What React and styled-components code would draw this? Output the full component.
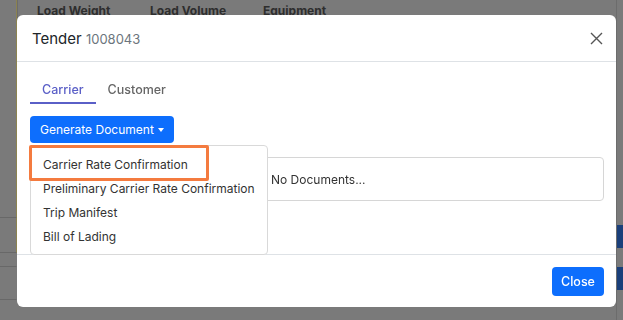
import React, { useState } from 'react'
import styled, { createGlobalStyle } from 'styled-components'

const GlobalStyle = createGlobalStyle`
	html, body {
		margin: 0;
		padding: 0;
		width: 623px;
		height: 320px;
		overflow: hidden;
		background: #7a7a7a;
		font-family: Inter, "Noto Sans", "Liberation Sans", sans-serif;
	}
`

const menuItems = [
	'Carrier Rate Confirmation',
	'Preliminary Carrier Rate Confirmation',
	'Trip Manifest',
	'Bill of Lading'
]

function CloseIcon() {
	return (
		<svg width="13" height="13" viewBox="0 0 13 13">
			<path d="M1 1 L12 12 M12 1 L1 12" stroke="#555" strokeWidth="1.4" fill="none" />
		</svg>
	)
}

function App() {
	const [tab, setTab] = useState('carrier')

	return (
		<>
			<GlobalStyle />
			<Page>
				<LeftStrip>
					<StripCell height={218} />
					<StripCell height={35} />
					<StripCell height={14} plain />
					<StripCell height={33} plain />
				</LeftStrip>
				<Main>
					<HeaderRow>
						<HeadCell>Load Weight</HeadCell>
						<HeadCell>Load Volume</HeadCell>
						<HeadCell>Equipment</HeadCell>
					</HeaderRow>
				</Main>
				<RightStrip>
					<BlueChip top={225} />
					<BlueChip top={267} />
				</RightStrip>
			</Page>

			<Modal>
				<ModalHeader>
					<Title>
						Tender <TitleId>1008043</TitleId>
					</Title>
					<CloseButton aria-label="close">
						<CloseIcon />
					</CloseButton>
				</ModalHeader>

				<ModalBody>
					<Tabs>
						<Tab active={tab === 'carrier'} onClick={() => setTab('carrier')}>
							Carrier
						</Tab>
						<Tab active={tab === 'customer'} onClick={() => setTab('customer')}>
							Customer
						</Tab>
					</Tabs>

					<Dropdown>
						<PrimaryButton>
							Generate Document<Caret />
						</PrimaryButton>
						<Menu>
							{menuItems.map((item, i) => (
								<MenuItem key={item}>
									{item}
									{i === 0 && <Highlight />}
								</MenuItem>
							))}
						</Menu>
					</Dropdown>

					<DocBox>
						<DocText>No Documents...</DocText>
					</DocBox>
				</ModalBody>

				<ModalFooter>
					<FooterButton>Close</FooterButton>
				</ModalFooter>
			</Modal>
		</>
	)
}

const Page = styled.div`
	display: grid;
	grid-template-columns: 17px 1fr 7px;
	height: 320px;
`
const LeftStrip = styled.div`
	display: flex;
	flex-direction: column;
`
const StripCell = styled.div`
	height: ${props => props.height}px;
	border-right: 1px solid ${props => (props.plain ? 'transparent' : '#8c8350')};
	border-bottom: 1px solid #686868;
	box-sizing: border-box;
`
const Main = styled.div`
	display: flex;
	flex-direction: column;
`
const HeaderRow = styled.div`
	display: flex;
	height: 22px;
	padding-left: 12px;
	border-left: 1px solid #6c6c6c;
`
const HeadCell = styled.div`
	width: 113px;
	padding-left: 7px;
	box-sizing: border-box;
	font-size: 12px;
	font-weight: 700;
	color: #2e2e2e;
	line-height: 22px;
	white-space: nowrap;
`
const RightStrip = styled.div`
	position: relative;
	border-left: 1px solid #6c6c6c;
`
const BlueChip = styled.div`
	position: absolute;
	left: 0;
	right: 0;
	top: ${props => props.top}px;
	height: 23px;
	background: #1a3f7a;
`

const Modal = styled.div`
	position: fixed;
	left: 17px;
	top: 15px;
	width: 599px;
	height: 292px;
	background: #fff;
	border-radius: 6px;
	display: flex;
	flex-direction: column;
	box-sizing: border-box;
`
const ModalHeader = styled.div`
	display: flex;
	align-items: center;
	justify-content: space-between;
	height: 47px;
	padding: 0 13px 0 15px;
	border-bottom: 1px solid #dee2e6;
	box-sizing: border-box;
	flex-shrink: 0;
`
const Title = styled.div`
	font-size: 15px;
	font-weight: 400;
	color: #212529;
`
const TitleId = styled.span`
	font-size: 13px;
	font-weight: 400;
	color: #6c757d;
`
const CloseButton = styled.button`
	border: none;
	background: none;
	padding: 0;
	display: flex;
	cursor: pointer;
`
const ModalBody = styled.div`
	flex: 1;
	padding: 14px 12px 0 13px;
	display: flex;
	flex-direction: column;
`
const Tabs = styled.div`
	display: flex;
`
const Tab = styled.div`
	padding: 6px 12px 4px;
	font-size: 12.5px;
	line-height: 16px;
	font-weight: 500;
	color: ${props => (props.active ? '#5a5fc7' : '#666')};
	border-bottom: 2px solid ${props => (props.active ? '#5a5fc7' : 'transparent')};
	cursor: pointer;
`
const Dropdown = styled.div`
	position: relative;
	margin-top: 12px;
	align-self: flex-start;
`
const PrimaryButton = styled.button`
	display: flex;
	align-items: center;
	height: 27px;
	padding: 0 10px;
	border: none;
	border-radius: 4px;
	background: #0d6efd;
	color: #fff;
	font-family: inherit;
	font-size: 12px;
	cursor: pointer;
`
const Caret = styled.span`
	margin-left: 4px;
	border-top: 4px solid #fff;
	border-left: 3px solid transparent;
	border-right: 3px solid transparent;
`
const Menu = styled.div`
	position: absolute;
	top: 29px;
	left: 0;
	width: 238px;
	box-sizing: border-box;
	padding: 7px 0 5px;
	background: #fff;
	border: 1px solid #d9d9d9;
	border-radius: 4px;
	z-index: 2;
`
const MenuItem = styled.div`
	position: relative;
	height: 24px;
	line-height: 24px;
	padding-left: 12px;
	font-size: 12px;
	color: #333;
	white-space: nowrap;
`
const Highlight = styled.div`
	position: absolute;
	left: -2px;
	top: -8px;
	width: 180px;
	height: 36px;
	box-sizing: border-box;
	border: 3px solid #f47b3f;
	border-radius: 2px;
`
const DocBox = styled.div`
	margin-top: 14px;
	height: 44px;
	border: 1px solid #d6d6d6;
	border-radius: 4px;
	display: flex;
	align-items: center;
	box-sizing: border-box;
`
const DocText = styled.span`
	padding-left: 240px;
	font-size: 12px;
	color: #333;
`
const ModalFooter = styled.div`
	height: 53px;
	border-top: 1px solid #dee2e6;
	display: flex;
	align-items: center;
	justify-content: flex-end;
	padding: 0 12px;
	box-sizing: border-box;
	flex-shrink: 0;
`
const FooterButton = styled.button`
	height: 29px;
	width: 52px;
	border: none;
	border-radius: 4px;
	background: #0d6efd;
	color: #fff;
	font-family: inherit;
	font-size: 12.5px;
	font-weight: 500;
	cursor: pointer;
`

export default App
